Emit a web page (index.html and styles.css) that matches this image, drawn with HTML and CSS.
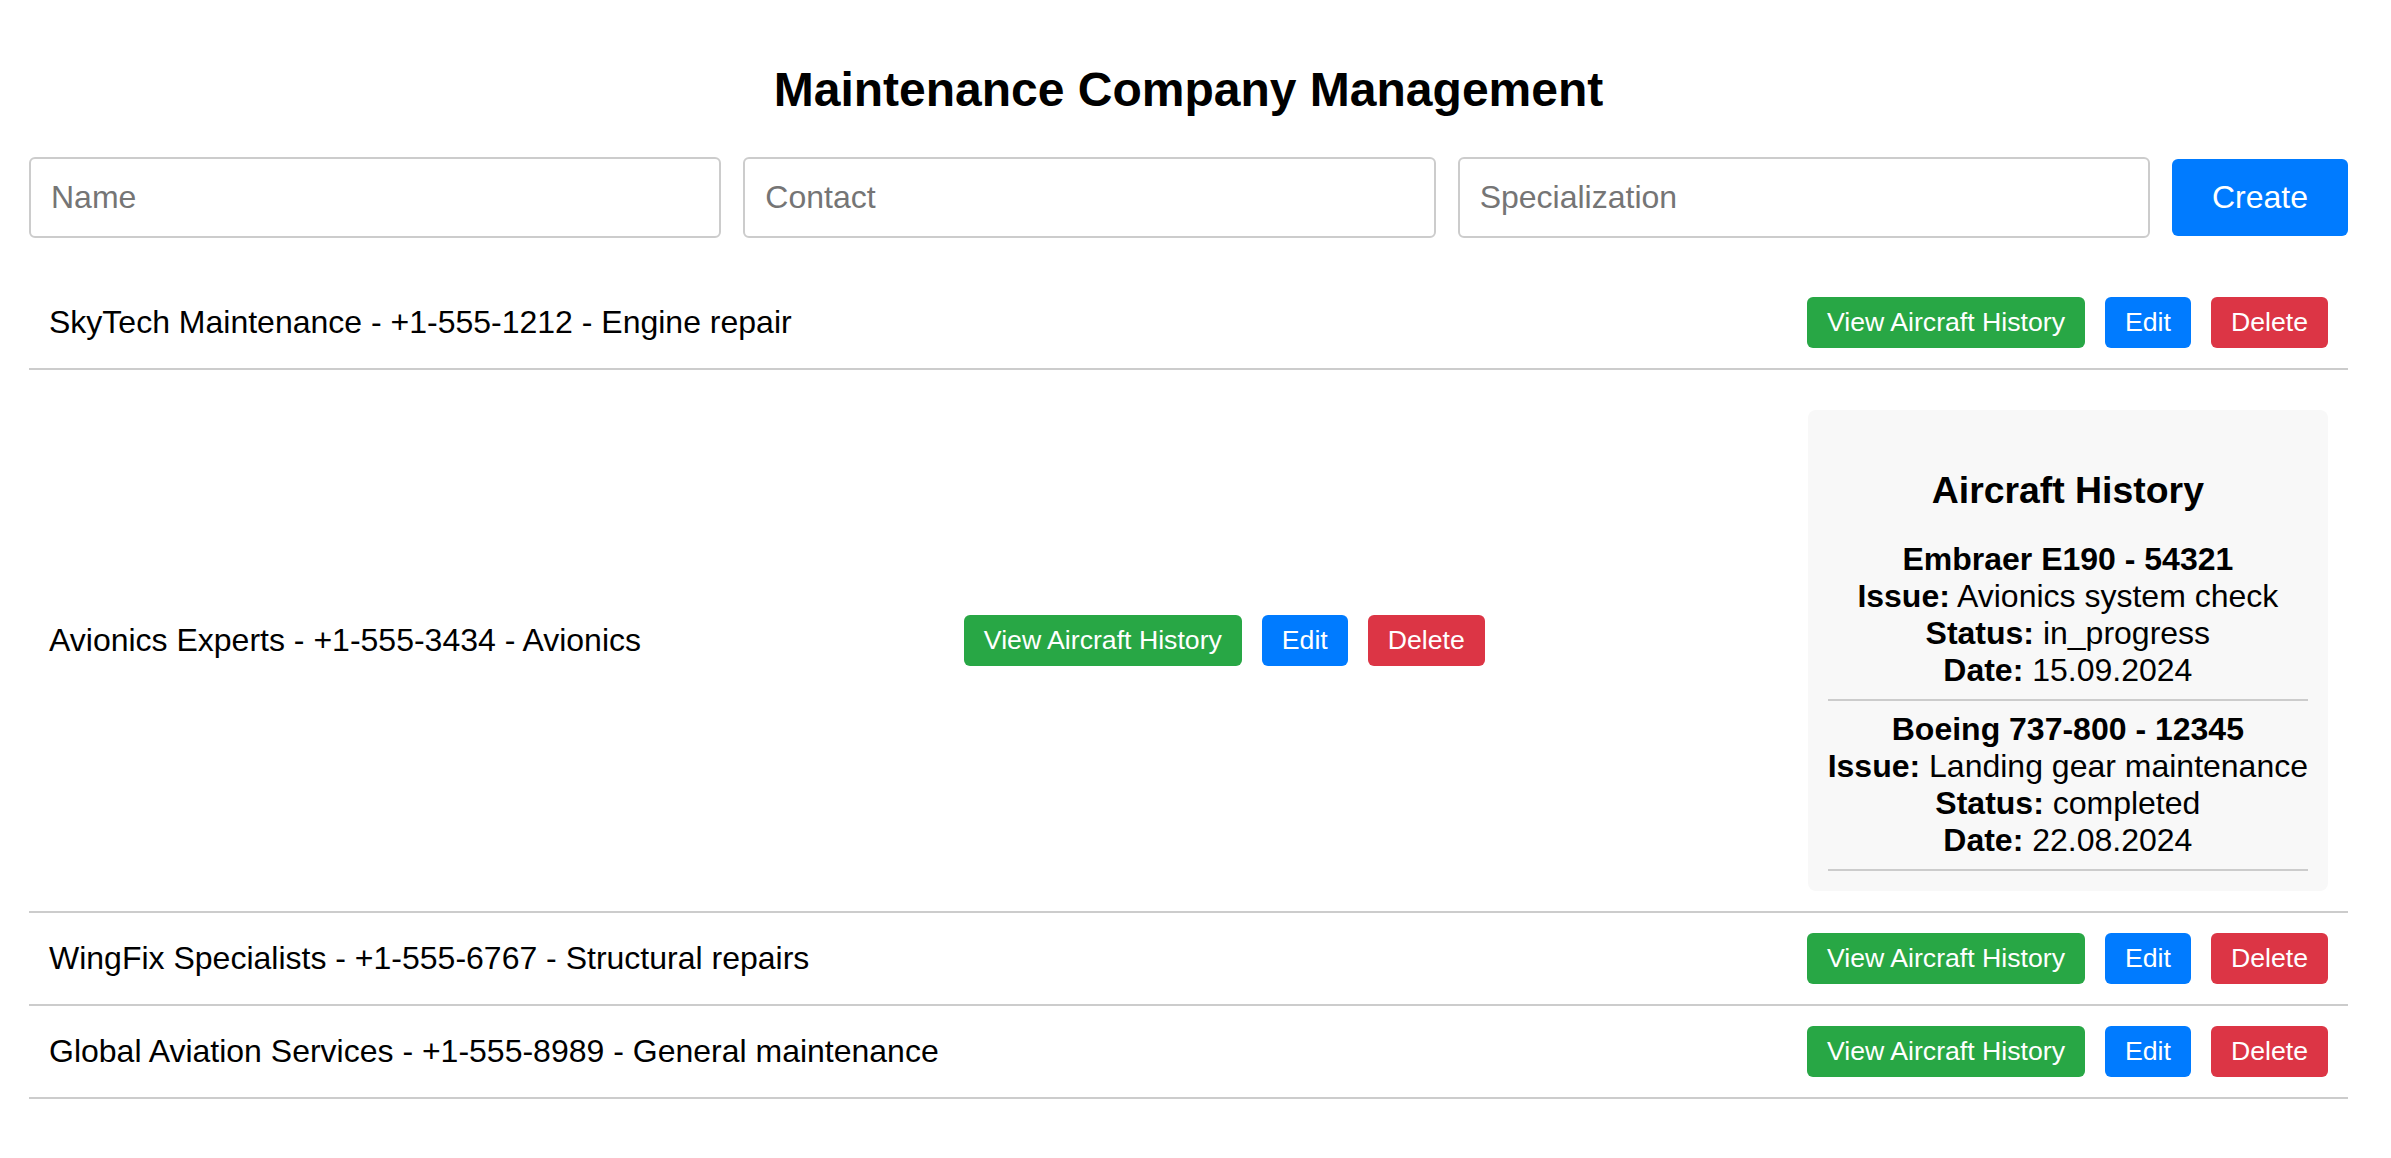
FILE: index.html
```html
<!DOCTYPE html>
<html lang="en">
<head>
<meta charset="utf-8">
<title>Maintenance Company Management</title>
<link rel="stylesheet" href="styles.css">
</head>
<body>
<div class="app">
  <h1 class="title">Maintenance Company Management</h1>
  <form class="create-form">
    <input class="field" type="text" placeholder="Name">
    <input class="field" type="text" placeholder="Contact">
    <input class="field" type="text" placeholder="Specialization">
    <button class="btn-create" type="button">Create</button>
  </form>
  <ul class="company-list">
    <li class="company-row">
      <span class="company-info">SkyTech Maintenance - +1-555-1212 - Engine repair</span>
      <div class="actions">
        <button class="btn btn-history" type="button">View Aircraft History</button>
        <button class="btn btn-edit" type="button">Edit</button>
        <button class="btn btn-delete" type="button">Delete</button>
      </div>
    </li>
    <li class="company-row">
      <span class="company-info">Avionics Experts - +1-555-3434 - Avionics</span>
      <div class="actions">
        <button class="btn btn-history" type="button">View Aircraft History</button>
        <button class="btn btn-edit" type="button">Edit</button>
        <button class="btn btn-delete" type="button">Delete</button>
      </div>
      <div class="history">
        <h3 class="history-title">Aircraft History</h3>
        <div class="history-item">
          <div class="aircraft">Embraer E190 - 54321</div>
          <div><strong>Issue:</strong> Avionics system check</div>
          <div><strong>Status:</strong> in_progress</div>
          <div><strong>Date:</strong> 15.09.2024</div>
        </div>
        <div class="history-item">
          <div class="aircraft">Boeing 737-800 - 12345</div>
          <div><strong>Issue:</strong> Landing gear maintenance</div>
          <div><strong>Status:</strong> completed</div>
          <div><strong>Date:</strong> 22.08.2024</div>
        </div>
      </div>
    </li>
    <li class="company-row">
      <span class="company-info">WingFix Specialists - +1-555-6767 - Structural repairs</span>
      <div class="actions">
        <button class="btn btn-history" type="button">View Aircraft History</button>
        <button class="btn btn-edit" type="button">Edit</button>
        <button class="btn btn-delete" type="button">Delete</button>
      </div>
    </li>
    <li class="company-row">
      <span class="company-info">Global Aviation Services - +1-555-8989 - General maintenance</span>
      <div class="actions">
        <button class="btn btn-history" type="button">View Aircraft History</button>
        <button class="btn btn-edit" type="button">Edit</button>
        <button class="btn btn-delete" type="button">Delete</button>
      </div>
    </li>
  </ul>
</div>
</body>
</html>
```

FILE: styles.css
```css
html, body {
  margin: 0;
  padding: 0;
  background: #ffffff;
}

body {
  font-family: "Liberation Sans", Arial, sans-serif;
  color: #000000;
  font-size: 32px;
}

.app {
  padding: 62px 43px 40px 29px;
}

.title {
  margin: 0 0 39.5px;
  font-size: 48px;
  font-weight: bold;
  text-align: center;
}

.create-form {
  display: flex;
  align-items: center;
  gap: 22px;
  margin: 0 0 39px;
}

.field {
  flex: 1 1 0;
  min-width: 0;
  font-family: "Liberation Sans", Arial, sans-serif;
  font-size: 32px;
  padding: 20px;
  border: 2px solid #cccccc;
  border-radius: 6px;
  color: #000000;
  background: #ffffff;
  outline: none;
}

.field::placeholder {
  color: #757575;
}

.btn-create {
  flex: none;
  font-family: "Liberation Sans", Arial, sans-serif;
  font-size: 32px;
  padding: 20px 40px;
  border: none;
  border-radius: 6px;
  background: #007bff;
  color: #ffffff;
}

.company-list {
  list-style: none;
  margin: 0;
  padding: 0;
}

.company-row {
  display: flex;
  justify-content: space-between;
  align-items: center;
  padding: 20px;
  border-bottom: 2px solid #cccccc;
}

.company-info {
  white-space: nowrap;
}

.actions {
  display: flex;
  gap: 20px;
}

.btn {
  font-family: "Liberation Sans", Arial, sans-serif;
  font-size: 26.67px;
  padding: 10px 20px;
  border: none;
  border-radius: 6px;
  color: #ffffff;
  white-space: nowrap;
}

.btn-history {
  background: #28a745;
}

.btn-edit {
  background: #007bff;
}

.btn-delete {
  background: #dc3545;
}

.history {
  margin-top: 20px;
  padding: 20px;
  background: #f8f8f8;
  border-radius: 8px;
  text-align: center;
}

.history-title {
  margin: 39px 0 19px;
  font-size: 37.4px;
  font-weight: bold;
}

.history-item {
  padding: 10px 0;
  border-bottom: 2px solid #cccccc;
  white-space: nowrap;
}

.aircraft {
  font-weight: bold;
}
```
